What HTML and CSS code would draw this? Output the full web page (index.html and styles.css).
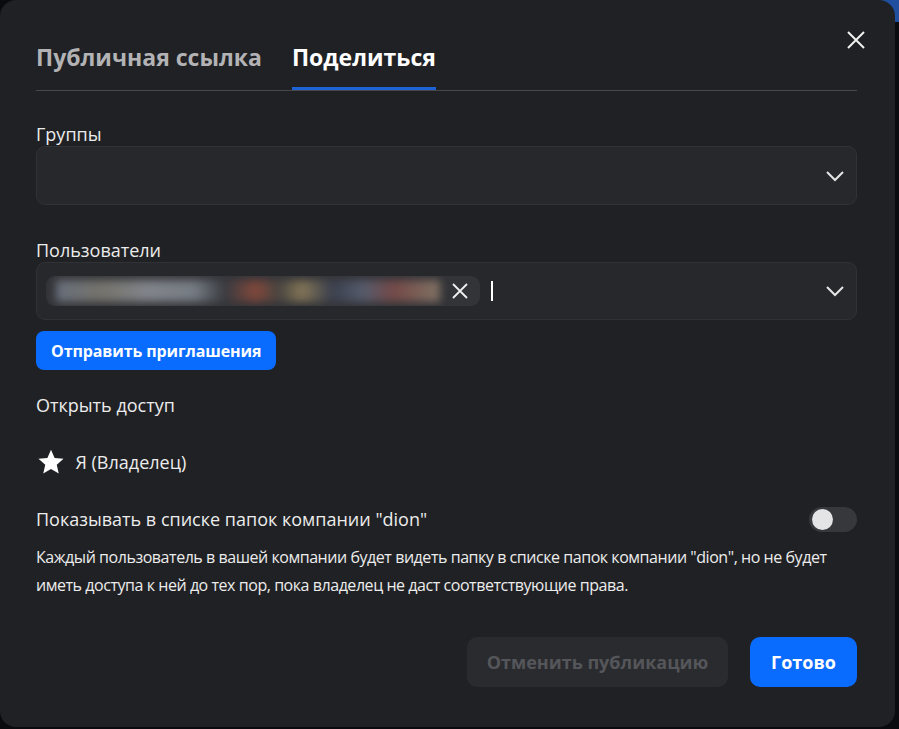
FILE: index.html
```html
<!DOCTYPE html>
<html lang="ru">
<head>
<meta charset="utf-8">
<title>Поделиться</title>
<link rel="stylesheet" href="styles.css">
</head>
<body>
<div class="accent"></div>
<div class="modal">
  <button class="close" aria-label="Закрыть">
    <svg width="20" height="20" viewBox="0 0 20 20"><path d="M2 2L18 18M18 2L2 18" stroke="#f2f2f2" stroke-width="2" fill="none"/></svg>
  </button>
  <div class="tabs">
    <div class="tab">Публичная ссылка</div>
    <div class="tab active">Поделиться</div>
  </div>

  <div class="label groups-label">Группы</div>
  <div class="select">
    <div class="select-body"></div>
    <svg class="chevron" width="20" height="12" viewBox="0 0 20 12"><path d="M2 2L10 10L18 2" stroke="#e6e6e6" stroke-width="2" fill="none"/></svg>
  </div>

  <div class="label users-label">Пользователи</div>
  <div class="select users">
    <div class="select-body">
      <div class="chip">
        <div class="chip-blur"></div>
        <svg class="chip-x" width="16" height="16" viewBox="0 0 16 16"><path d="M1 1L15 15M15 1L1 15" stroke="#f0f0f0" stroke-width="1.8" fill="none"/></svg>
      </div>
      <div class="caret"></div>
    </div>
    <svg class="chevron" width="20" height="12" viewBox="0 0 20 12"><path d="M2 2L10 10L18 2" stroke="#e6e6e6" stroke-width="2" fill="none"/></svg>
  </div>

  <button class="btn primary invite">Отправить приглашения</button>

  <div class="label access-label">Открыть доступ</div>
  <div class="owner">
    <svg class="star" width="30" height="30" viewBox="0 0 24 24"><path d="M12 2.2l2.9 6.5 7.1.7-5.4 4.8 1.6 7L12 17.5l-6.2 3.7 1.6-7L2 9.4l7.1-.7z" fill="#ffffff"/></svg>
    <span>Я (Владелец)</span>
  </div>

  <div class="show-row">
    <span class="label">Показывать в списке папок компании "dion"</span>
    <div class="toggle"><div class="knob"></div></div>
  </div>
  <p class="desc">Каждый пользователь в вашей компании будет видеть папку в списке папок компании "dion", но не будет иметь доступа к ней до тех пор, пока владелец не даст соответствующие права.</p>

  <div class="actions">
    <button class="btn ghost">Отменить публикацию</button>
    <button class="btn primary done">Готово</button>
  </div>
</div>
</body>
</html>
```
FILE: styles.css
```css
* { box-sizing: border-box; }
html, body { margin: 0; padding: 0; }
body {
  width: 899px;
  height: 729px;
  overflow: hidden;
  background: #0a0b0e;
  font-family: "Open Sans", "Noto Sans", sans-serif;
  color: #e8e8e8;
  position: relative;
}
.accent {
  position: absolute;
  top: 0;
  right: 0;
  width: 40px;
  height: 22px;
  background: #1f4f9e;
}
.modal {
  position: relative;
  width: 895px;
  height: 727px;
  background: #202124;
  border-radius: 16px;
  padding: 42px 38px 0 36px;
}
.close {
  position: absolute;
  top: 30px;
  right: 29px;
  width: 20px;
  height: 20px;
  padding: 0;
  border: 0;
  background: none;
  display: flex;
}
.tabs {
  display: flex;
  gap: 30px;
  align-items: flex-end;
  border-bottom: 1px solid #47484c;
}
.tab {
  font-size: 23px;
  line-height: 30px;
  font-weight: 700;
  color: #b3b3b5;
  padding-bottom: 15px;
  border-bottom: 3px solid transparent;
}
.tab.active {
  color: #ffffff;
  border-bottom-color: #1e63d6;
}
.label {
  font-size: 18px;
  line-height: 24px;
  color: #ececec;
}
.groups-label { margin-top: 31px; }
.users-label { margin-top: 33px; }
.select {
  height: 59px;
  background: #27282c;
  border: 1px solid #313236;
  border-radius: 9px;
  display: flex;
  align-items: center;
  padding: 0 11px 0 9px;
}
.select.users { height: 58px; }
.select-body {
  flex: 1;
  display: flex;
  align-items: center;
  gap: 11px;
}
.chevron { flex: none; }
.chip {
  width: 434px;
  height: 30px;
  background: #333438;
  border-radius: 9px;
  display: flex;
  align-items: center;
  padding: 0 12px 0 10px;
  gap: 12px;
  overflow: hidden;
}
.chip-blur {
  flex: 1;
  height: 22px;
  filter: blur(4px);
  background: linear-gradient(90deg,
    #6e7683 0%, #7d7a72 12%, #8a8d94 24%, #7e848c 36%,
    #3a3c42 44%, #8a4a3c 52%, #4a4642 58%, #8c7c5a 64%,
    #3c4150 72%, #5a6072 80%, #7c4c4a 88%, #8a7a6a 100%);
  opacity: 0.9;
}
.chip-x { flex: none; }
.caret {
  width: 2px;
  height: 20px;
  background: #ffffff;
}
.btn {
  font-family: "Open Sans", "Noto Sans", sans-serif;
  font-weight: 700;
  border: 0;
  color: #ffffff;
  display: block;
  white-space: nowrap;
}
.primary { background: #0a6cff; }
.invite {
  margin-top: 11px;
  height: 39px;
  padding: 0 15px;
  font-size: 16px;
  border-radius: 8px;
  letter-spacing: -0.1px;
}
.access-label { margin-top: 23px; }
.owner {
  margin-top: 33px;
  height: 24px;
  display: flex;
  align-items: center;
  gap: 10px;
  font-size: 18px;
  line-height: 24px;
  color: #ececec;
}
.star {
  flex: none;
  margin-left: -0.5px;
}
.show-row {
  margin-top: 32px;
  display: flex;
  align-items: center;
  justify-content: space-between;
  height: 26px;
}
.toggle {
  width: 48px;
  height: 25px;
  border-radius: 13px;
  background: #37383c;
  padding: 2px 3px;
}
.knob {
  width: 21px;
  height: 21px;
  border-radius: 50%;
  background: #e4e4e6;
}
.desc {
  margin: 11px 0 0;
  font-size: 16px;
  line-height: 28px;
  color: #ececec;
  letter-spacing: -0.45px;
}
.actions {
  margin-top: 38px;
  display: flex;
  justify-content: flex-end;
  gap: 22px;
}
.actions .btn {
  height: 50px;
  border-radius: 10px;
  font-size: 18px;
  padding: 0;
}
.ghost {
  background: #2a2b2f;
  color: #55565a;
  width: 261px;
}
.done { width: 107px; }
```
